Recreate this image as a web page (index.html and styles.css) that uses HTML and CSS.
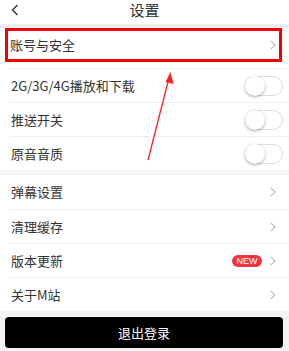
FILE: index.html
```html
<!DOCTYPE html>
<html lang="zh">
<head>
<meta charset="utf-8">
<link rel="stylesheet" href="styles.css">
</head>
<body>
<div class="page">
  <header class="header">
    <span class="back">
      <svg width="8" height="12" viewBox="0 0 8 12"><path d="M6.5 1 L1.5 6 L6.5 11" fill="none" stroke="#333" stroke-width="1.4"/></svg>
    </span>
    <h1 class="title">设置</h1>
    <span></span>
  </header>
  <div class="band band-top"></div>
  <section class="group">
    <div class="row-first">
      <div class="highlight">
        <span class="label">账号与安全</span>
        <svg class="chev" width="6" height="10" viewBox="0 0 6 10"><path d="M0.8 0.8 L5 5 L0.8 9.2" fill="none" stroke="#bbb" stroke-width="1.1"/></svg>
      </div>
    </div>
    <div class="row"><span class="label">2G/3G/4G播放和下载</span><span class="toggle"><span class="knob"></span></span></div>
    <div class="row"><span class="label">推送开关</span><span class="toggle"><span class="knob"></span></span></div>
    <div class="row"><span class="label">原音音质</span><span class="toggle"><span class="knob"></span></span></div>
  </section>
  <div class="band band-mid"></div>
  <section class="group">
    <div class="row first"><span class="label">弹幕设置</span><svg class="chev" width="6" height="10" viewBox="0 0 6 10"><path d="M0.8 0.8 L5 5 L0.8 9.2" fill="none" stroke="#bbb" stroke-width="1.1"/></svg></div>
    <div class="row"><span class="label">清理缓存</span><svg class="chev" width="6" height="10" viewBox="0 0 6 10"><path d="M0.8 0.8 L5 5 L0.8 9.2" fill="none" stroke="#bbb" stroke-width="1.1"/></svg></div>
    <div class="row"><span class="label">版本更新</span><span class="right"><span class="badge">NEW</span><svg class="chev" width="6" height="10" viewBox="0 0 6 10"><path d="M0.8 0.8 L5 5 L0.8 9.2" fill="none" stroke="#bbb" stroke-width="1.1"/></svg></span></div>
    <div class="row"><span class="label">关于M站</span><svg class="chev" width="6" height="10" viewBox="0 0 6 10"><path d="M0.8 0.8 L5 5 L0.8 9.2" fill="none" stroke="#bbb" stroke-width="1.1"/></svg></div>
  </section>
  <div class="footer">
    <button class="logout">退出登录</button>
  </div>
  <svg class="arrow" width="289" height="351" viewBox="0 0 289 351">
    <line x1="148" y1="160" x2="168.5" y2="80" stroke="#f22" stroke-width="1.3"/>
    <polygon points="170.5,72 173.5,84 165.5,82" fill="#f22"/>
  </svg>
</div>
</body>
</html>
```
FILE: styles.css
```css
html, body {
  margin: 0;
  padding: 0;
  background: #f4f4f4;
}
body {
  font-family: "Noto Sans CJK SC", "Noto Sans", sans-serif;
  color: #333;
}
.page {
  position: relative;
  width: 289px;
  height: 351px;
  overflow: hidden;
}
.header {
  height: 24px;
  background: #fff;
  display: grid;
  grid-template-columns: 30px 1fr 30px;
  align-items: center;
}
.back {
  display: flex;
  padding-left: 11px;
  padding-bottom: 5px;
}
.title {
  margin: 0;
  font-size: 15px;
  font-weight: normal;
  text-align: center;
  line-height: 20px;
  padding-bottom: 5px;
}
.band-top {
  height: 3px;
  background: #efefef;
}
.band-mid {
  height: 5px;
  background: #f4f4f4;
}
.group {
  background: #fff;
}
.row-first {
  height: 41px;
  box-sizing: border-box;
  padding: 1px 7px 6px 5px;
}
.highlight {
  height: 34px;
  box-sizing: border-box;
  border: 3px solid #f40000;
  display: flex;
  align-items: center;
  justify-content: space-between;
  padding: 0 3px 0 2px;
}
.label {
  font-size: 13px;
  line-height: 18px;
}
.row {
  height: 34px;
  box-sizing: border-box;
  margin-left: 10px;
  padding: 0 6px 0 1px;
  border-top: 1px solid #efefef;
  display: flex;
  align-items: center;
  justify-content: space-between;
}
.row.first {
  border-top: none;
}
.row .chev {
  margin-right: 7px;
}
.right {
  display: flex;
  align-items: center;
  gap: 8px;
  margin-right: 7px;
}
.right .chev {
  margin-right: 0;
}
.badge {
  width: 30px;
  height: 12px;
  border-radius: 6px;
  background: #f5333f;
  color: #fff;
  font-family: "Liberation Sans", Arial, sans-serif;
  font-size: 9px;
  line-height: 12px;
  text-align: center;
}
.toggle {
  position: relative;
  width: 38px;
  height: 20px;
  box-sizing: border-box;
  border: 1px solid #dedede;
  border-radius: 10px;
  background: #fff;
}
.knob {
  position: absolute;
  left: -1px;
  top: -1px;
  width: 20px;
  height: 20px;
  border-radius: 50%;
  background: #fff;
  box-shadow: 0 1px 3px rgba(0,0,0,0.35);
}
.footer {
  padding: 6px 6px 0 5px;
}
.logout {
  display: block;
  width: 100%;
  height: 31px;
  border: none;
  border-radius: 4px;
  background: #000;
  color: #fff;
  font-family: "Noto Sans CJK SC", "Noto Sans", sans-serif;
  font-size: 13px;
  padding: 0;
}
.arrow {
  position: absolute;
  left: 0;
  top: 0;
  pointer-events: none;
}
```
